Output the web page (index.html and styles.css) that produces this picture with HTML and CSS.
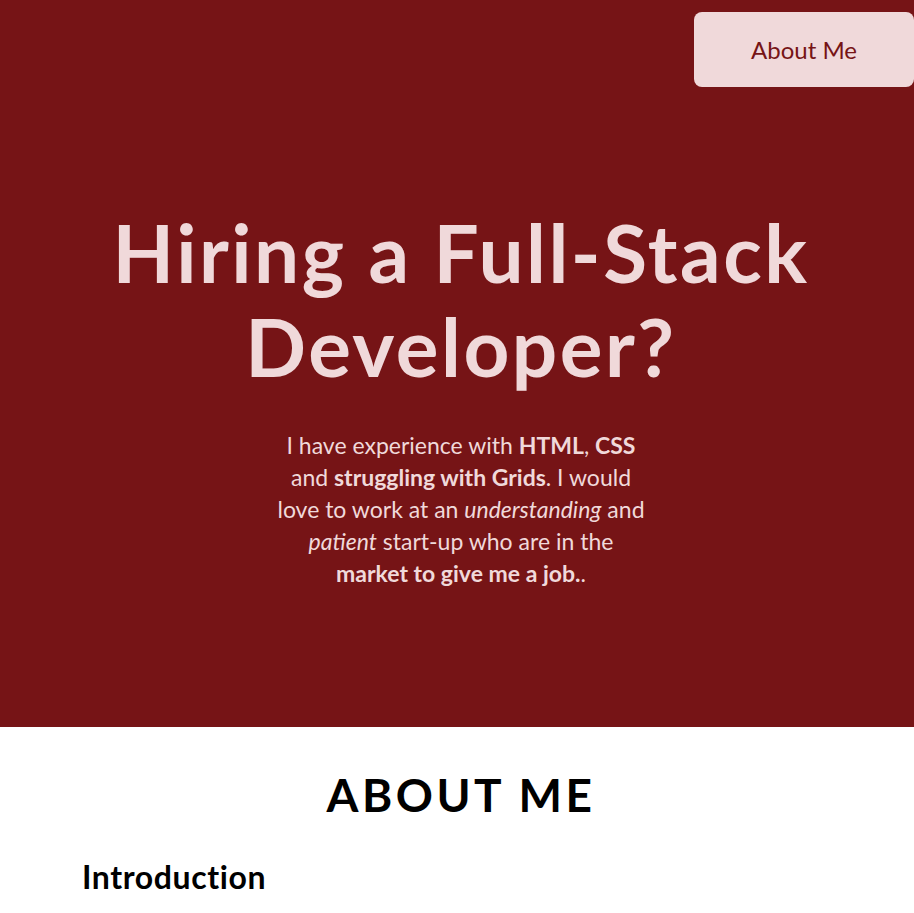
FILE: index.html
```html
<!DOCTYPE html>
<html lang="en">
<head>
<meta charset="utf-8">
<title>Hiring a Full-Stack Developer?</title>
<link rel="stylesheet" href="styles.css">
</head>
<body>
<header class="hero">
  <nav class="nav">
    <a class="nav-btn" href="#about">About Me</a>
  </nav>
  <div class="hero-content">
    <h1 class="hero-title">Hiring a Full-Stack Developer?</h1>
    <p class="hero-text">I have experience with <strong>HTML</strong>, <strong>CSS</strong> and <strong>struggling with Grids</strong>. I would love to work at an <em>understanding</em> and <em>patient</em> start-up who are in the <strong>market to give me a job.</strong>.</p>
  </div>
</header>
<main class="about" id="about">
  <h2 class="about-title">ABOUT ME</h2>
  <h3 class="about-sub">Introduction</h3>
</main>
</body>
</html>
```
FILE: styles.css
```css
* { box-sizing: border-box; }
html, body { margin: 0; padding: 0; }
body {
  font-family: "Lato", "Open Sans", sans-serif;
  background: #ffffff;
  color: #000;
}
.hero {
  background: #761416;
  color: #f0d9da;
  height: 727px;
  display: flex;
  flex-direction: column;
}
.nav {
  display: flex;
  justify-content: flex-end;
  padding-top: 12px;
}
.nav-btn {
  display: flex;
  align-items: center;
  justify-content: center;
  width: 220px;
  height: 75px;
  background: #f0d9da;
  color: #761416;
  text-decoration: none;
  font-size: 24px;
  border-radius: 8px;
}
.hero-content {
  display: flex;
  flex-direction: column;
  align-items: center;
  padding: 118px 0 0 8px;
}
.hero-title {
  margin: 0;
  font-size: 80px;
  line-height: 94px;
  font-weight: 700;
  letter-spacing: 2.5px;
  text-align: center;
  width: 800px;
}
.hero-text {
  margin: 36px 0 0;
  width: 370px;
  text-align: center;
  font-size: 23px;
  line-height: 32px;
}
.hero-text strong { font-weight: 700; }
.about { padding: 40px 0 0; }
.about-title {
  margin: 0;
  padding-left: 8px;
  text-align: center;
  font-size: 46px;
  font-weight: 700;
  line-height: 56px;
  letter-spacing: 3.5px;
}
.about-sub {
  margin: 34px 0 0 82px;
  font-size: 32px;
  font-weight: 700;
  letter-spacing: 0.6px;
}
```
